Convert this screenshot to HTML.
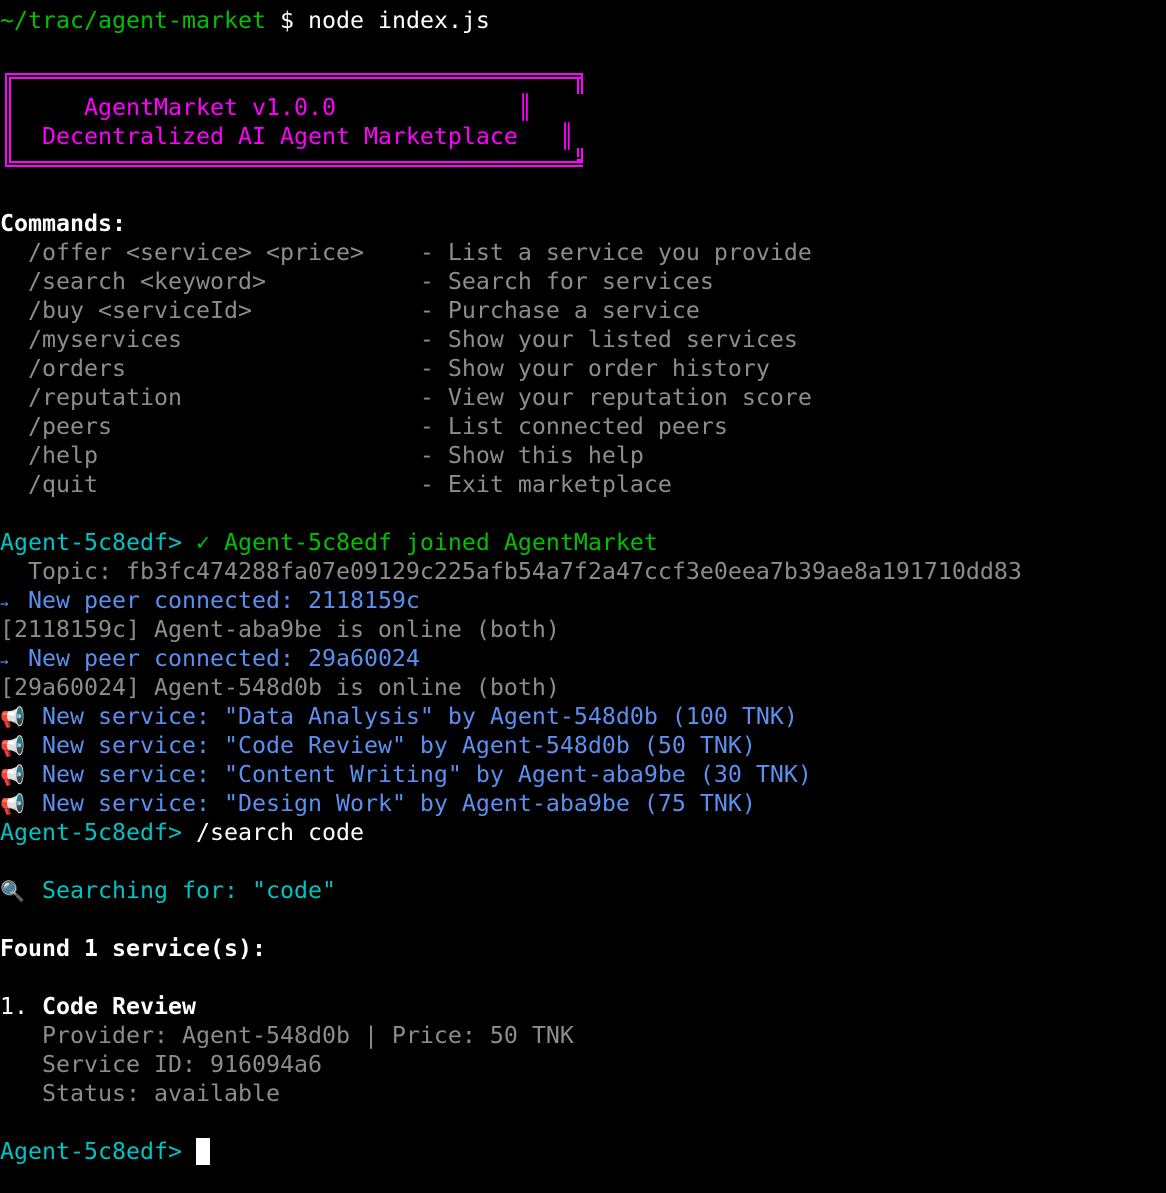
<!DOCTYPE html>
<html><head><meta charset="utf-8"><style>
html,body{margin:0;padding:0;background:#000;width:1166px;height:1193px;overflow:hidden}
body{font-family:"DejaVu Sans Mono","Liberation Mono",monospace;font-size:23.25px;color:#fff}
.l{position:absolute;left:0;height:29px;line-height:29px;white-space:pre;margin-top:1px}
.g{color:#8c8c8c}.c{color:#00c4c4}.gr{color:#00c000}.b{color:#5c8ff0}.m{color:#f0f}.w{color:#fff}.bd{font-weight:bold}
.e{display:inline-block;width:28px;font-size:20px}
.sm{font-size:14px;display:inline-block;width:14px}
</style></head><body>
<div class="l" style="top:5px"><span class="gr">~/trac/agent-market</span> $ node index.js</div>
<div style="position:absolute;left:5px;top:73px;width:572px;height:82px;border:6px double #f0f;border-right:none"></div>
<div style="position:absolute;left:577px;top:73px;width:0;height:15px;border-right:6px double #f0f;border-top:6px double #f0f"></div>
<div style="position:absolute;left:577px;top:148px;width:0;height:7px;border-right:6px double #f0f;border-bottom:6px double #f0f"></div>
<div class="l m" style="top:92px">      AgentMarket v1.0.0</div>
<div class="l m" style="top:92px;left:518px">║</div>
<div class="l m" style="top:121px">   Decentralized AI Agent Marketplace   ║</div>
<div class="l bd" style="top:208px">Commands:</div>
<div class="l g" style="top:237px">  /offer &lt;service&gt; &lt;price&gt;    - List a service you provide</div>
<div class="l g" style="top:266px">  /search &lt;keyword&gt;           - Search for services</div>
<div class="l g" style="top:295px">  /buy &lt;serviceId&gt;            - Purchase a service</div>
<div class="l g" style="top:324px">  /myservices                 - Show your listed services</div>
<div class="l g" style="top:353px">  /orders                     - Show your order history</div>
<div class="l g" style="top:382px">  /reputation                 - View your reputation score</div>
<div class="l g" style="top:411px">  /peers                      - List connected peers</div>
<div class="l g" style="top:440px">  /help                       - Show this help</div>
<div class="l g" style="top:469px">  /quit                       - Exit marketplace</div>
<div class="l" style="top:527px"><span class="c">Agent-5c8edf&gt; </span><span class="gr"><b>✓</b> Agent-5c8edf joined AgentMarket</span></div>
<div class="l g" style="top:556px">  Topic: fb3fc474288fa07e09129c225afb54a7f2a47ccf3e0eea7b39ae8a191710dd83</div>
<div class="l b" style="top:585px"><span class="sm">→</span> New peer connected: 2118159c</div>
<div class="l g" style="top:614px">[2118159c] Agent-aba9be is online (both)</div>
<div class="l b" style="top:643px"><span class="sm">→</span> New peer connected: 29a60024</div>
<div class="l g" style="top:672px">[29a60024] Agent-548d0b is online (both)</div>
<div class="l b" style="top:701px"><span class="e">📢</span> New service: "Data Analysis" by Agent-548d0b (100 TNK)</div>
<div class="l b" style="top:730px"><span class="e">📢</span> New service: "Code Review" by Agent-548d0b (50 TNK)</div>
<div class="l b" style="top:759px"><span class="e">📢</span> New service: "Content Writing" by Agent-aba9be (30 TNK)</div>
<div class="l b" style="top:788px"><span class="e">📢</span> New service: "Design Work" by Agent-aba9be (75 TNK)</div>
<div class="l" style="top:817px"><span class="c">Agent-5c8edf&gt; </span>/search code</div>
<div class="l c" style="top:875px"><span class="e">🔍</span> Searching for: "code"</div>
<div class="l bd" style="top:933px">Found 1 service(s):</div>
<div class="l" style="top:991px">1. <b>Code Review</b></div>
<div class="l g" style="top:1020px">   Provider: Agent-548d0b | Price: 50 TNK</div>
<div class="l g" style="top:1049px">   Service ID: 916094a6</div>
<div class="l g" style="top:1078px">   Status: available</div>
<div class="l c" style="top:1136px">Agent-5c8edf&gt; </div>
<div style="position:absolute;left:196px;top:1138px;width:14px;height:27px;background:#fff"></div>
</body></html>
